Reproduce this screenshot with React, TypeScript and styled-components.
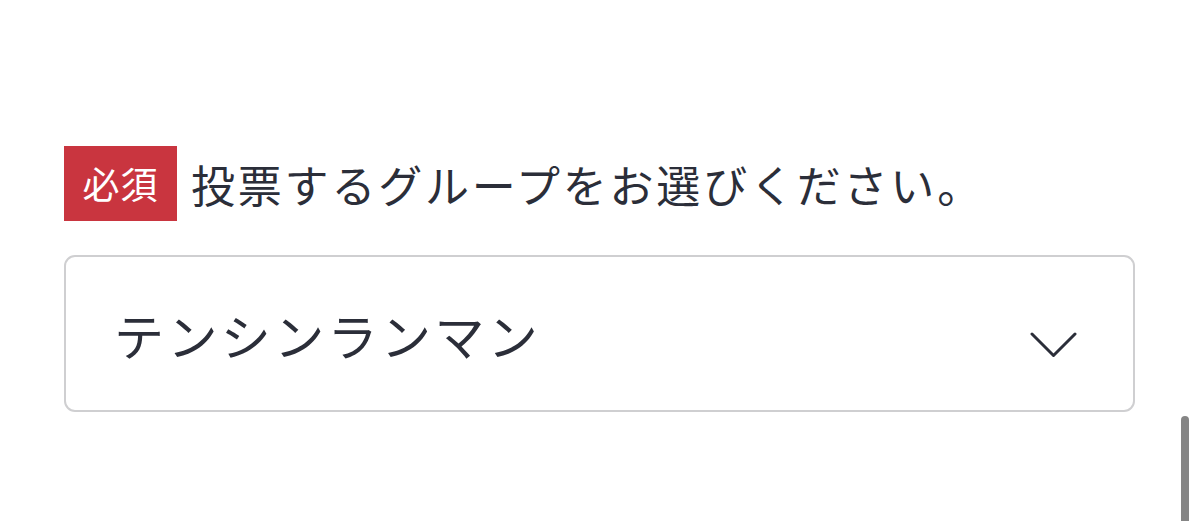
import React from 'react';
import styled, { createGlobalStyle } from 'styled-components';

const GlobalStyle = createGlobalStyle`
  html, body {
    margin: 0;
    padding: 0;
    background: #ffffff;
    font-family: "Noto Sans CJK JP", "Noto Sans", sans-serif;
  }
`;

const Page = styled.div`
  position: relative;
  width: 1199px;
  height: 521px;
  padding: 146px 64px 0 64px;
  box-sizing: border-box;
  overflow: hidden;
`;

const LabelRow = styled.div`
  display: flex;
  align-items: center;
  gap: 14px;
`;

const RequiredBadge = styled.span`
  display: flex;
  align-items: center;
  justify-content: center;
  width: 113px;
  height: 75px;
  background: #c9353f;
  color: #ffffff;
  font-size: 37px;
  letter-spacing: 1px;
  line-height: 1;
`;

const LabelText = styled.span`
  color: #2b2e39;
  font-size: 44px;
  letter-spacing: 2.8px;
  line-height: 1;
`;

const SelectBox = styled.div`
  display: flex;
  align-items: center;
  justify-content: space-between;
  margin-top: 34px;
  width: 1071px;
  height: 157px;
  box-sizing: border-box;
  padding: 0 56px 0 48px;
  border: 2px solid #cfcfd1;
  border-radius: 11px;
  background: #ffffff;
`;

const SelectValue = styled.span`
  color: #2b2e39;
  font-size: 50px;
  letter-spacing: 3.4px;
  line-height: 1;
`;

const Chevron = styled.svg`
  width: 47px;
  height: 26px;
  margin-top: 22px;
  flex-shrink: 0;
`;

const ScrollThumb = styled.div`
  position: absolute;
  left: 1181px;
  top: 416px;
  width: 8px;
  height: 120px;
  border-radius: 4px;
  background: #858585;
`;

const App: React.FC = () => {
  return (
    <>
      <GlobalStyle />
      <Page>
        <LabelRow>
          <RequiredBadge>必須</RequiredBadge>
          <LabelText>投票するグループをお選びください。</LabelText>
        </LabelRow>
        <SelectBox>
          <SelectValue>テンシンランマン</SelectValue>
          <Chevron viewBox="0 0 47 26" fill="none">
            <path
              d="M2 2 L23.5 23.5 L45 2"
              stroke="#2b2e39"
              strokeWidth="3"
              strokeLinecap="round"
              strokeLinejoin="round"
            />
          </Chevron>
        </SelectBox>
        <ScrollThumb />
      </Page>
    </>
  );
};

export default App;
